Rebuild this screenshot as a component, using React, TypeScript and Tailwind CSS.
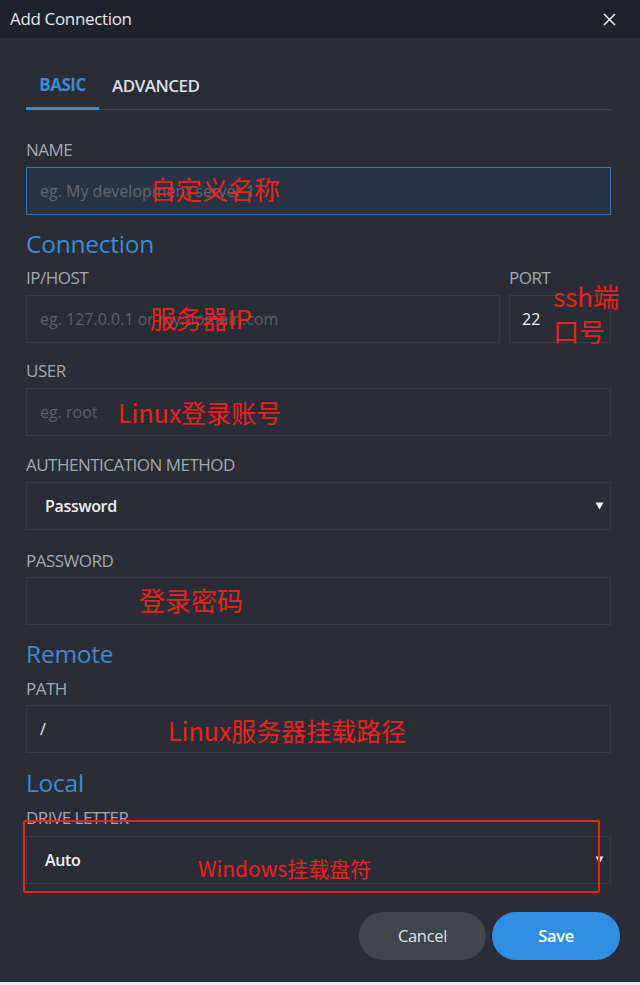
import React from "react";

const red = "text-[#e8231c]";

function Label({ children, className = "" }: { children: React.ReactNode; className?: string }) {
  return (
    <div className={`h-5 leading-5 text-[17px] font-medium tracking-[-0.03em] text-[#a3a7ae] ${className}`}>{children}</div>
  );
}

function Heading({ children, className = "" }: { children: React.ReactNode; className?: string }) {
  return <div className={`h-[30px] leading-[30px] text-[24.5px] tracking-[-0.01em] text-[#3a8ad4] ${className}`}>{children}</div>;
}

function Box({
  children,
  className = "",
  tone = "border border-[#353a43]",
}: {
  children?: React.ReactNode;
  className?: string;
  tone?: string;
}) {
  return <div className={`relative h-[48px] flex items-center ${tone} ${className}`}>{children}</div>;
}

function Note({ children, className = "" }: { children: React.ReactNode; className?: string }) {
  return (
    <span
      className={`absolute whitespace-nowrap ${red} ${className}`}
      style={{ fontFamily: '"Microsoft YaHei", "Noto Sans CJK SC", "Noto Sans", sans-serif' }}
    >
      {children}
    </span>
  );
}

function Arrow() {
  return (
    <svg className="absolute right-[6px] top-[19px]" width="9" height="8" viewBox="0 0 9 8">
      <path d="M0.5 0.5 H8.5 L4.5 7.5 Z" fill="#f1f2f4" />
    </svg>
  );
}

export default function App() {
  return (
    <div
      className="w-[640px] h-[985px] bg-[#2a2d35] flex flex-col overflow-hidden relative"
      style={{ fontFamily: '"Open Sans", "Noto Sans", sans-serif' }}
    >
      <div className="h-[38px] bg-[#1f2229] flex items-center justify-between pl-[10px] pr-[24px] shrink-0">
        <div className="text-[17px] text-[#e4e6ea] tracking-[-0.02em]">Add Connection</div>
        <svg width="13" height="13" viewBox="0 0 13 13">
          <path d="M1 1 L12 12 M12 1 L1 12" stroke="#e9eaec" strokeWidth="1.6" />
        </svg>
      </div>

      <div className="flex-1 pl-[26px] pr-[29px] flex flex-col">
        <div className="mt-[24px] flex border-b border-[#3e434c] h-[48px]">
          <div className="w-[73px] h-[48px] flex items-center justify-center border-b-[3px] border-[#3a8ad4] -mb-px text-[17px] font-bold text-[#3a8ad4] tracking-[-0.03em]">
            BASIC
          </div>
          <div className="px-[13px] h-[47px] flex items-center text-[17px] font-semibold text-[#dcdee2] tracking-[-0.03em]">
            ADVANCED
          </div>
        </div>

        <Label className="mt-[30px]">NAME</Label>
        <Box className="mt-[7px]" tone="border-[1.5px] border-[#3172b0] bg-[#283443]">
          <span className="pl-[13px] text-[16px] text-[#5f6772]">eg. My development server 1</span>
          <Note className="left-[123px] top-[4px] text-[26px] leading-[34px]">自定义名称</Note>
        </Box>

        <Heading className="mt-[14px]">Connection</Heading>

        <div className="mt-[9px] flex gap-[9px]">
          <div className="flex-1 flex flex-col">
            <Label>IP/HOST</Label>
            <Box className="mt-[7px]">
              <span className="pl-[13px] text-[16px] text-[#5b616b]">eg. 127.0.0.1 or my.domain.com</span>
              <Note className="left-[123px] top-[5px] text-[26px] leading-[34px]">服务器IP</Note>
            </Box>
          </div>
          <div className="w-[102px] flex flex-col relative">
            <Label>PORT</Label>
            <Box className="mt-[7px]">
              <span className="pl-[12px] text-[16px] text-[#f0f1f3]">22</span>
            </Box>
            <Note className="left-[44px] top-[10px] text-[26px] leading-[35px]">
              ssh端
              <br />
              口号
            </Note>
          </div>
        </div>

        <Label className="mt-[18px]">USER</Label>
        <Box className="mt-[7px]">
          <span className="pl-[13px] text-[16px] text-[#5b616b]">eg. root</span>
          <Note className="left-[91px] top-[6px] text-[25px] leading-[34px]">Linux登录账号</Note>
        </Box>

        <Label className="mt-[19px]">AUTHENTICATION METHOD</Label>
        <Box className="mt-[7px]">
          <span className="pl-[18px] text-[16px] font-semibold text-[#eef0f2] tracking-[-0.02em]">Password</span>
          <Arrow />
        </Box>

        <Label className="mt-[21px]">PASSWORD</Label>
        <Box className="mt-[6px]">
          <Note className="left-[112px] top-[5px] text-[26px] leading-[34px]">登录密码</Note>
        </Box>

        <Heading className="mt-[14px]">Remote</Heading>
        <Label className="mt-[10px]">PATH</Label>
        <Box className="mt-[6px]">
          <span className="pl-[13px] text-[16px] text-[#eef0f2]">/</span>
          <Note className="left-[141px] top-[7px] text-[25px] leading-[34px]">Linux服务器挂载路径</Note>
        </Box>

        <Heading className="mt-[15px]">Local</Heading>
        <Label className="mt-[10px]">DRIVE LETTER</Label>
        <Box className="mt-[8px]">
          <span className="pl-[18px] text-[16px] font-semibold text-[#eef0f2] tracking-[-0.02em]">Auto</span>
          <Arrow />
          <Note className="left-[171px] top-[17px] text-[21px] leading-[28px]">Windows挂载盘符</Note>
        </Box>

        <div className="mt-[28px] flex justify-end gap-[6px] -mr-[9px]">
          <button className="w-[127px] h-[48px] rounded-full bg-[#40444c] text-[16.5px] text-[#dfe1e4] tracking-[-0.02em]">
            Cancel
          </button>
          <button className="w-[128px] h-[48px] rounded-full bg-[#2f8fe1] text-[16.5px] font-semibold text-white tracking-[-0.02em]">
            Save
          </button>
        </div>
      </div>

      <div className="absolute left-[23px] top-[820px] w-[577px] h-[73px] border-2 border-[#e8231c] rounded-[2px] pointer-events-none" />
      <div className="h-[3px] bg-[#e9eaec] shrink-0" />
    </div>
  );
}
